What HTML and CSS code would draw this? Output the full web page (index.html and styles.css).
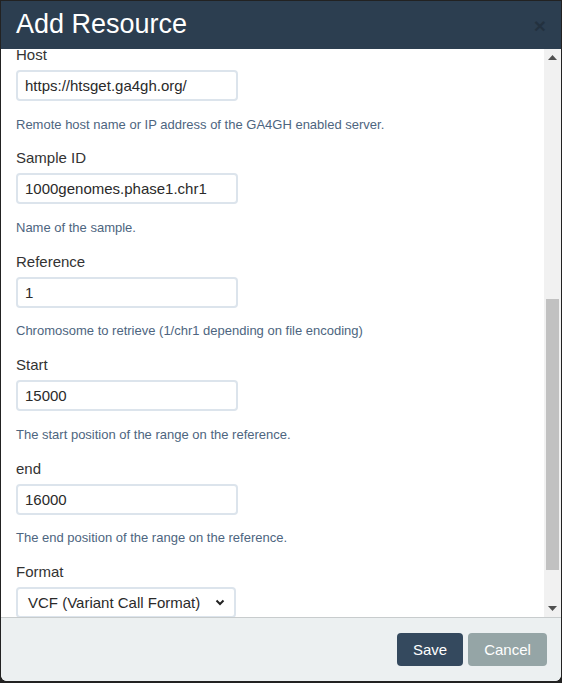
FILE: index.html
```html
<!DOCTYPE html>
<html>
<head>
<meta charset="utf-8">
<link rel="stylesheet" href="styles.css">
</head>
<body>
<div class="modal">
  <div class="modal-header">
    <h4 class="modal-title">Add Resource</h4>
    <span class="close">&times;</span>
  </div>
  <div class="modal-body">
    <div class="content">
      <div class="inner">
        <div class="group">
          <label>Host</label>
          <div class="input">https://htsget.ga4gh.org/</div>
          <p class="help">Remote host name or IP address of the GA4GH enabled server.</p>
        </div>
        <div class="group">
          <label>Sample ID</label>
          <div class="input">1000genomes.phase1.chr1</div>
          <p class="help">Name of the sample.</p>
        </div>
        <div class="group">
          <label>Reference</label>
          <div class="input">1</div>
          <p class="help">Chromosome to retrieve (1/chr1 depending on file encoding)</p>
        </div>
        <div class="group">
          <label>Start</label>
          <div class="input">15000</div>
          <p class="help">The start position of the range on the reference.</p>
        </div>
        <div class="group">
          <label>end</label>
          <div class="input">16000</div>
          <p class="help">The end position of the range on the reference.</p>
        </div>
        <div class="group">
          <label>Format</label>
          <div class="select"><span>VCF (Variant Call Format)</span>
            <svg class="chev" width="10" height="7" viewBox="0 0 10 7"><path d="M1.5 1.5 L5 5 L8.5 1.5" fill="none" stroke="#222" stroke-width="2"/></svg>
          </div>
        </div>
      </div>
    </div>
    <div class="scrollbar">
      <div class="sb-btn"><svg width="9" height="5" viewBox="0 0 9 5"><path d="M0 5 L4.5 0 L9 5 Z" fill="#505050"/></svg></div>
      <div class="sb-track"><div class="sb-thumb"></div></div>
      <div class="sb-btn"><svg width="9" height="5" viewBox="0 0 9 5"><path d="M0 0 L4.5 5 L9 0 Z" fill="#505050"/></svg></div>
    </div>
  </div>
  <div class="modal-footer">
    <button class="btn btn-save">Save</button>
    <button class="btn btn-cancel">Cancel</button>
  </div>
</div>
</body>
</html>
```

FILE: styles.css
```css
* { box-sizing: border-box; }
html, body { margin: 0; padding: 0; }
body {
  background: #222;
  font-family: "Liberation Sans", Arial, sans-serif;
  width: 562px;
  height: 683px;
  overflow: hidden;
}
.modal {
  margin: 1px 1px 2px 1px;
  width: 560px;
  height: 680px;
  background: #fff;
  border-radius: 0 0 6px 6px;
  overflow: hidden;
  display: flex;
  flex-direction: column;
}
.modal-header {
  height: 48px;
  flex: none;
  background: #2c3e50;
  display: flex;
  align-items: center;
  justify-content: space-between;
  padding: 0 15px 3px 15px;
}
.modal-title {
  margin: 0;
  color: #fff;
  font-weight: normal;
  font-size: 27px;
  line-height: 30px;
}
.close {
  color: #000;
  opacity: 0.2;
  font-size: 21px;
  font-weight: bold;
  line-height: 1;
  margin-top: 3px;
}
.modal-body {
  flex: 1;
  display: flex;
  min-height: 0;
}
.content {
  flex: 1;
  overflow: hidden;
  padding: 0 15px;
}
.inner {
  margin-top: -4px;
}
.group {
  margin-bottom: 14.9px;
}
label {
  display: block;
  font-size: 15px;
  line-height: 20px;
  color: #333;
  margin-bottom: 5px;
}
.input, .select {
  width: 222px;
  height: 31px;
  border: 2px solid #dce4ec;
  border-radius: 4px;
  padding: 0 7px;
  font-size: 15px;
  line-height: 27px;
  color: #2a2a2a;
}
.select {
  width: 220px;
  display: flex;
  align-items: center;
  justify-content: space-between;
  padding: 0 9px 0 10px;
}
.chev { flex: none; }
.help {
  margin: 14.5px 0 0 0;
  font-size: 13px;
  line-height: 18px;
  color: #4d6580;
}
.scrollbar {
  width: 17px;
  flex: none;
  background: #f1f1f1;
  display: flex;
  flex-direction: column;
}
.sb-btn {
  height: 17px;
  flex: none;
  display: flex;
  align-items: center;
  justify-content: center;
}
.sb-track {
  flex: 1;
  display: flex;
  flex-direction: column;
  justify-content: flex-end;
  padding: 0 2px 30px 2px;
}
.sb-thumb {
  height: 271px;
  background: #c1c1c1;
}
.modal-footer {
  flex: none;
  height: 64px;
  border-top: 1px solid #c8cccd;
  background: #ecf0f1;
  display: flex;
  justify-content: flex-end;
  align-items: flex-start;
  gap: 5px;
  padding: 15px 14px 0 0;
}
.btn {
  height: 33px;
  border: none;
  border-radius: 4px;
  color: #fff;
  font-family: "Liberation Sans", Arial, sans-serif;
  font-size: 15px;
  padding: 0;
}
.btn-save { background: #34495e; width: 66px; }
.btn-cancel { background: #95a5a6; width: 79px; }
```
